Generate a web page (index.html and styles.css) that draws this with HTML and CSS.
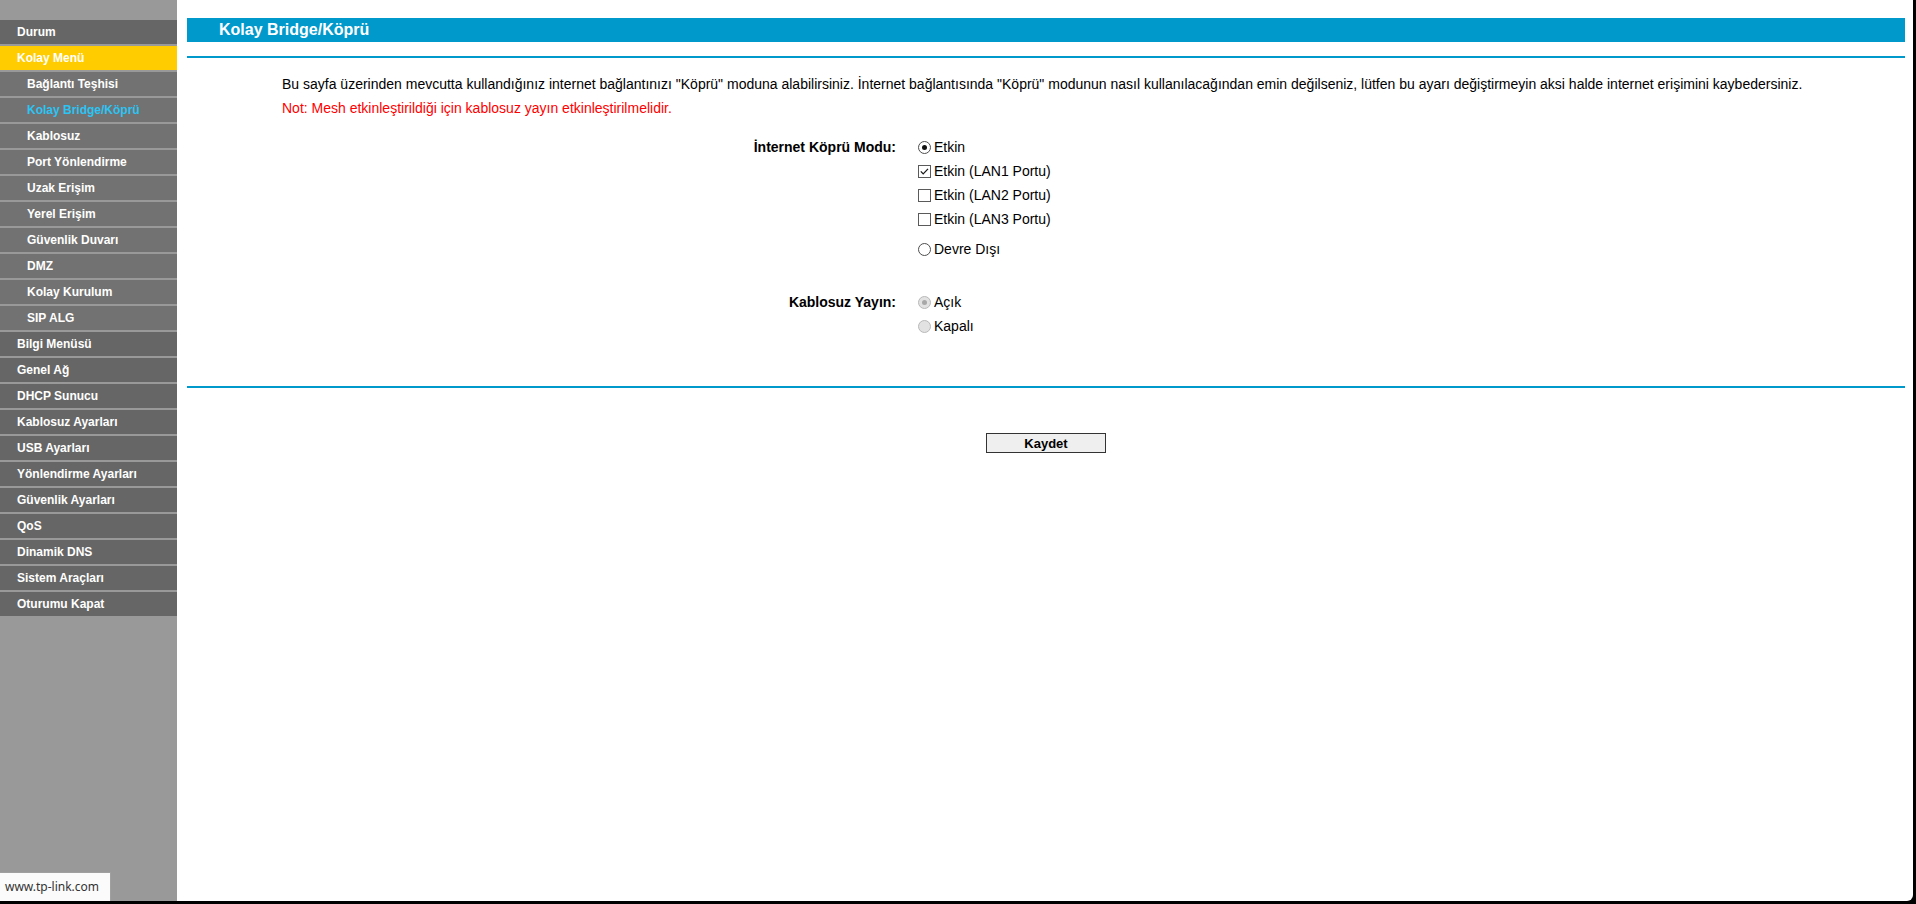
FILE: index.html
```html
<!DOCTYPE html>
<html lang="tr">
<head>
<meta charset="utf-8">
<title>Kolay Bridge/Köprü</title>
<link rel="stylesheet" href="styles.css">
</head>
<body>
<div class="window">
  <nav class="sidebar">
    <div class="menu-item main">Durum</div>
    <div class="menu-item main open">Kolay Menü</div>
    <div class="menu-item sub">Bağlantı Teşhisi</div>
    <div class="menu-item sub active">Kolay Bridge/Köprü</div>
    <div class="menu-item sub">Kablosuz</div>
    <div class="menu-item sub">Port Yönlendirme</div>
    <div class="menu-item sub">Uzak Erişim</div>
    <div class="menu-item sub">Yerel Erişim</div>
    <div class="menu-item sub">Güvenlik Duvarı</div>
    <div class="menu-item sub">DMZ</div>
    <div class="menu-item sub">Kolay Kurulum</div>
    <div class="menu-item sub">SIP ALG</div>
    <div class="menu-item main">Bilgi Menüsü</div>
    <div class="menu-item main">Genel Ağ</div>
    <div class="menu-item main">DHCP Sunucu</div>
    <div class="menu-item main">Kablosuz Ayarları</div>
    <div class="menu-item main">USB Ayarları</div>
    <div class="menu-item main">Yönlendirme Ayarları</div>
    <div class="menu-item main">Güvenlik Ayarları</div>
    <div class="menu-item main">QoS</div>
    <div class="menu-item main">Dinamik DNS</div>
    <div class="menu-item main">Sistem Araçları</div>
    <div class="menu-item main">Oturumu Kapat</div>
  </nav>
  <main class="content">
    <div class="title-bar">Kolay Bridge/Köprü</div>
    <div class="rule"></div>
    <div class="intro">
      <p class="desc">Bu sayfa üzerinden mevcutta kullandığınız internet bağlantınızı "Köprü" moduna alabilirsiniz. İnternet bağlantısında "Köprü" modunun nasıl kullanılacağından emin değilseniz, lütfen bu ayarı değiştirmeyin aksi halde internet erişimini kaybedersiniz.</p>
      <p class="note">Not: Mesh etkinleştirildiği için kablosuz yayın etkinleştirilmelidir.</p>
    </div>
    <div class="form">
      <div class="form-row">
        <div class="label">İnternet Köprü Modu:</div>
        <div class="options">
          <div class="option"><span class="radio checked"></span>Etkin</div>
          <div class="option"><svg class="checkbox" width="13" height="13" viewBox="0 0 13 13"><rect x="0.5" y="0.5" width="12" height="12" fill="#fff" stroke="#5a5a5a"/><path d="M2.8 6.4 L5.2 8.9 L10 3.9" fill="none" stroke="#1a1a1a" stroke-width="1.3"/></svg>Etkin (LAN1 Portu)</div>
          <div class="option"><svg class="checkbox" width="13" height="13" viewBox="0 0 13 13"><rect x="0.5" y="0.5" width="12" height="12" fill="#fff" stroke="#5a5a5a"/></svg>Etkin (LAN2 Portu)</div>
          <div class="option"><svg class="checkbox" width="13" height="13" viewBox="0 0 13 13"><rect x="0.5" y="0.5" width="12" height="12" fill="#fff" stroke="#5a5a5a"/></svg>Etkin (LAN3 Portu)</div>
          <div class="option spaced"><span class="radio"></span>Devre Dışı</div>
        </div>
      </div>
      <div class="form-row wireless">
        <div class="label">Kablosuz Yayın:</div>
        <div class="options">
          <div class="option"><span class="radio disabled checked"></span>Açık</div>
          <div class="option"><span class="radio disabled"></span>Kapalı</div>
        </div>
      </div>
    </div>
    <div class="rule bottom"></div>
    <div class="actions">
      <button class="save" type="button">Kaydet</button>
    </div>
  </main>
  <div class="status-tip">www.tp-link.com</div>
</div>
</body>
</html>
```
FILE: styles.css
```css
html, body {
  margin: 0;
  padding: 0;
  height: 100%;
}
body {
  background: #000;
  font-family: "Liberation Sans", Arial, sans-serif;
  color: #000;
  overflow: hidden;
}
.window {
  position: relative;
  display: flex;
  width: 1913px;
  height: 901px;
  background: #fff;
  border-bottom-right-radius: 6px;
  overflow: hidden;
}
.sidebar {
  width: 177px;
  flex: none;
  background: #999;
  padding-top: 20px;
  box-sizing: border-box;
}
.menu-item {
  height: 24px;
  line-height: 24px;
  margin-bottom: 2px;
  font-size: 12px;
  font-weight: bold;
  color: #fff;
  white-space: nowrap;
}
.menu-item.main {
  background: #666;
  padding-left: 17px;
}
.menu-item.sub {
  background: #727272;
  padding-left: 27px;
}
.menu-item.open {
  background: #ffcc00;
}
.menu-item.active {
  color: #2bc4f4;
}
.content {
  flex: 1;
  padding: 18px 8px 0 10px;
  min-width: 0;
}
.title-bar {
  height: 24px;
  line-height: 24px;
  background: #0099cc;
  color: #fff;
  font-size: 16px;
  font-weight: bold;
  padding-left: 32px;
}
.rule {
  height: 2px;
  background: #0099cc;
  margin-top: 14px;
}
.intro {
  padding-left: 95px;
  margin-top: 14px;
  font-size: 14px;
  line-height: 24px;
}
.intro p {
  margin: 0;
  white-space: nowrap;
}
.note {
  color: #ff0000;
}
.form {
  margin-top: 15px;
  font-size: 14px;
}
.form-row {
  display: grid;
  grid-template-columns: 709px auto;
  column-gap: 22px;
}
.form-row.wireless {
  margin-top: 29px;
}
.label {
  text-align: right;
  font-weight: bold;
  line-height: 24px;
}
.options {
  display: flex;
  flex-direction: column;
}
.option {
  display: flex;
  align-items: center;
  gap: 3px;
  height: 24px;
}
.option.spaced {
  margin-top: 6px;
}
.radio {
  width: 13px;
  height: 13px;
  box-sizing: border-box;
  border: 1px solid #4d4d4d;
  border-radius: 50%;
  background: #fff;
  display: inline-flex;
  align-items: center;
  justify-content: center;
  flex: none;
}
.radio.checked::after {
  content: "";
  width: 5px;
  height: 5px;
  border-radius: 50%;
  background: #111;
}
.radio.disabled {
  background: #e2e2e2;
  border-color: #b9b9b9;
}
.radio.disabled.checked::after {
  background: #a8a8a8;
}
.checkbox {
  flex: none;
  display: block;
}
.rule.bottom {
  margin-top: 48px;
}
.actions {
  display: flex;
  justify-content: center;
  margin-top: 45px;
}
.save {
  width: 120px;
  height: 20px;
  padding: 0;
  background: #efefef;
  border: 1px solid #333;
  font-family: "Liberation Sans", Arial, sans-serif;
  font-size: 13px;
  font-weight: bold;
  color: #000;
}
.status-tip {
  position: absolute;
  left: 0;
  bottom: 0;
  height: 28px;
  line-height: 28px;
  padding: 0 11px 0 5px;
  background: #fbfbfb;
  border-top: 1px solid #a0a0a0;
  border-right: 1px solid #a0a0a0;
  font-family: "Noto Sans", "Open Sans", sans-serif;
  font-size: 12px;
  color: #333;
}
```
